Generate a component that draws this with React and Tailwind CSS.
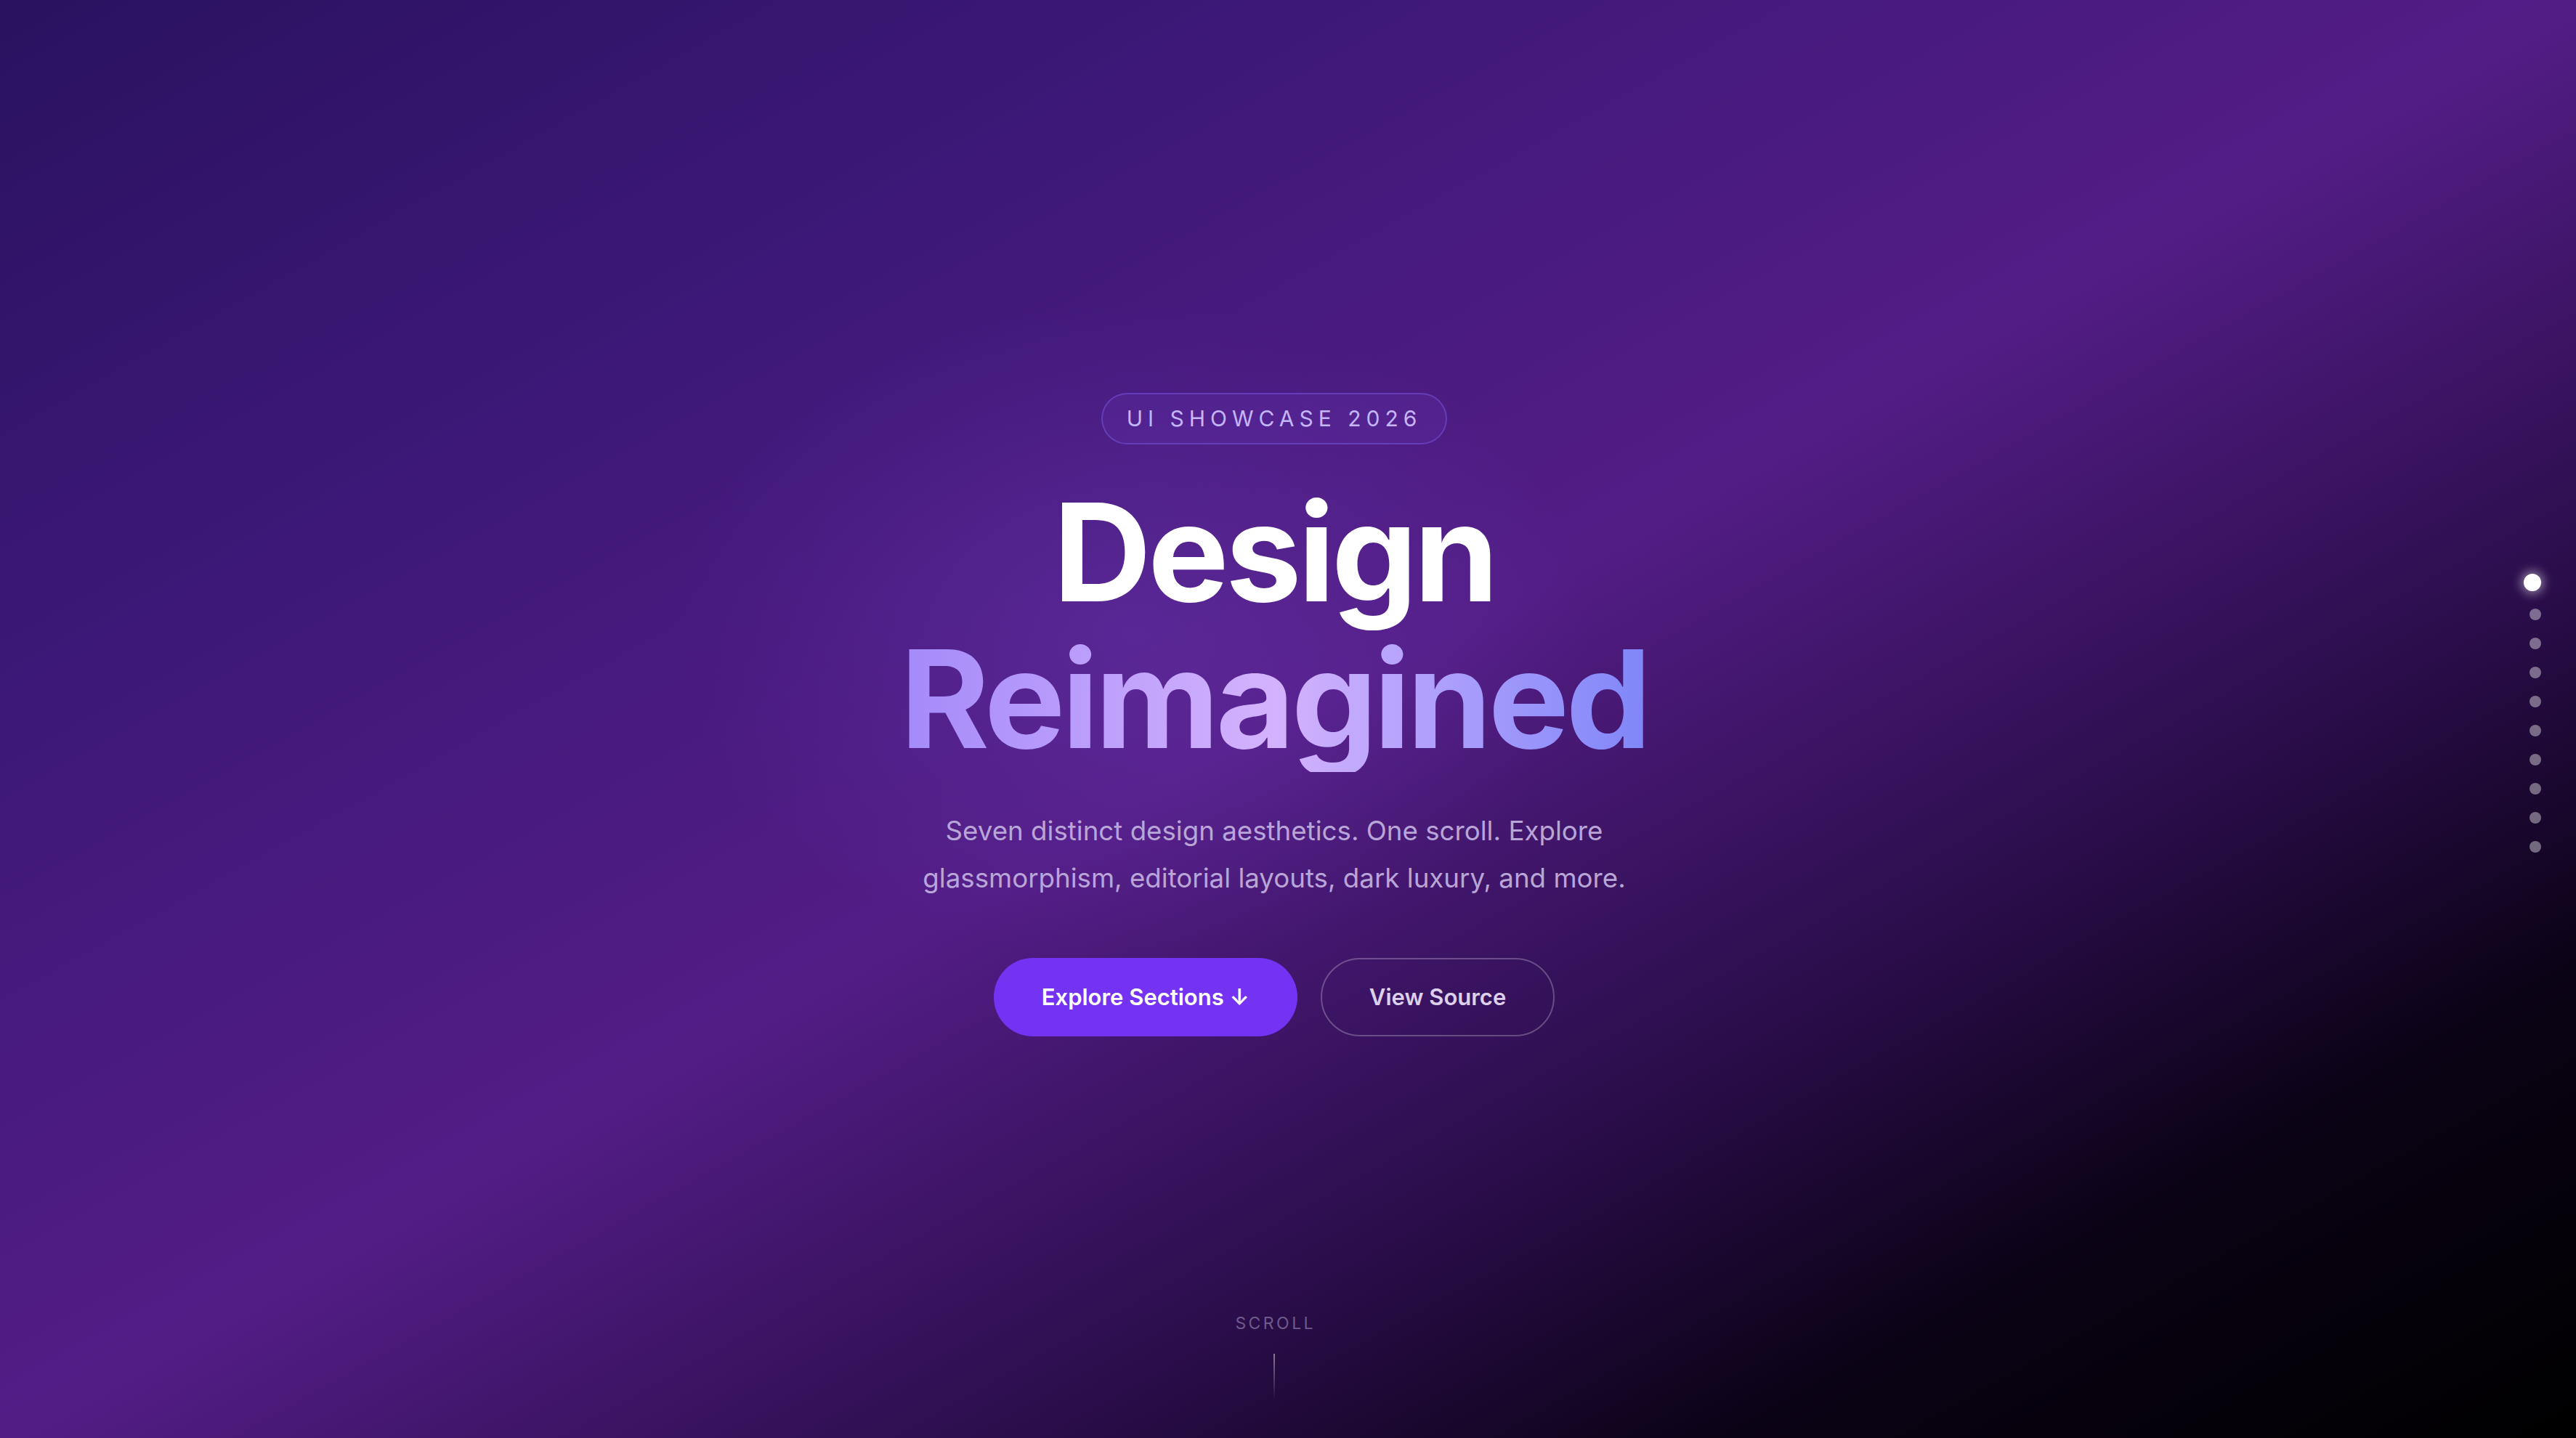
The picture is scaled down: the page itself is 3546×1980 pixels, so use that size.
import React from "react";

const font = "font-['Inter','Noto_Sans',sans-serif]";

function DotNav() {
  const dots = Array.from({ length: 9 });
  return (
    <nav className="absolute right-[48px] top-[790px] flex flex-col items-end gap-[24px]">
      <span className="block h-[24px] w-[24px] rounded-full bg-white shadow-[0_0_14px_4px_rgba(255,255,255,0.45)]" />
      {dots.map((_, i) => (
        <span key={i} className="block h-[16px] w-[16px] rounded-full bg-white/40" />
      ))}
    </nav>
  );
}

export default function App() {
  return (
    <div
      className={`relative h-[1980px] w-full overflow-hidden ${font} bg-[radial-gradient(ellipse_900px_650px_at_44%_44%,rgba(120,70,200,0.28),transparent_70%),linear-gradient(to_bottom_right,#2a1260_0%,#3d1878_25%,#531d86_50%,#2a0d4a_70%,#0a0214_84%,#000_100%)]`}
    >
      <main className="flex h-full flex-col items-center pr-[38px] pt-[541px]">
        <div className="flex h-[71px] items-center rounded-full border-2 border-[#6a45c2]/80 bg-[#8b5cf6]/10 px-[33px] text-[30px] font-normal tracking-[7px] text-[#c4b5fd]">
          UI SHOWCASE 2026
        </div>

        <h1 className="mt-[47px] flex flex-col items-center text-[187px] font-bold leading-[202px] tracking-[-0.025em]">
          <span className="text-white">Design</span>
          <span className="inline-block bg-linear-to-r from-[#a48af9] via-[#d4b2fd] to-[#7f86f8] bg-clip-text text-transparent">
            Reimagined
          </span>
        </h1>

        <p className="mt-[48px] text-center text-[36.7px] leading-[65px] text-[#b9a5d8]">
          Seven distinct design aesthetics. One scroll. Explore
          <br />
          glassmorphism, editorial layouts, dark luxury, and more.
        </p>

        <div className="mt-[78px] flex items-center gap-[32px]">
          <button className="flex h-[108px] items-center rounded-full bg-[#7433f3] px-[66px] text-[31px] font-semibold text-white">
            Explore Sections ↓
          </button>
          <button className="flex h-[108px] items-center rounded-full border-2 border-white/25 px-[65px] text-[31px] font-semibold text-[#ddd0ec]">
            View Source
          </button>
        </div>

        <div className="mt-auto flex flex-col items-center pb-[52px]">
          <span className="pl-[0.15em] text-[23px] leading-[28px] tracking-[0.15em] text-[#6f5a8c]">
            SCROLL
          </span>
          <span className="mt-[28px] block h-[64px] w-[2px] bg-linear-to-b from-white/45 to-transparent" />
        </div>
      </main>
      <DotNav />
    </div>
  );
}
